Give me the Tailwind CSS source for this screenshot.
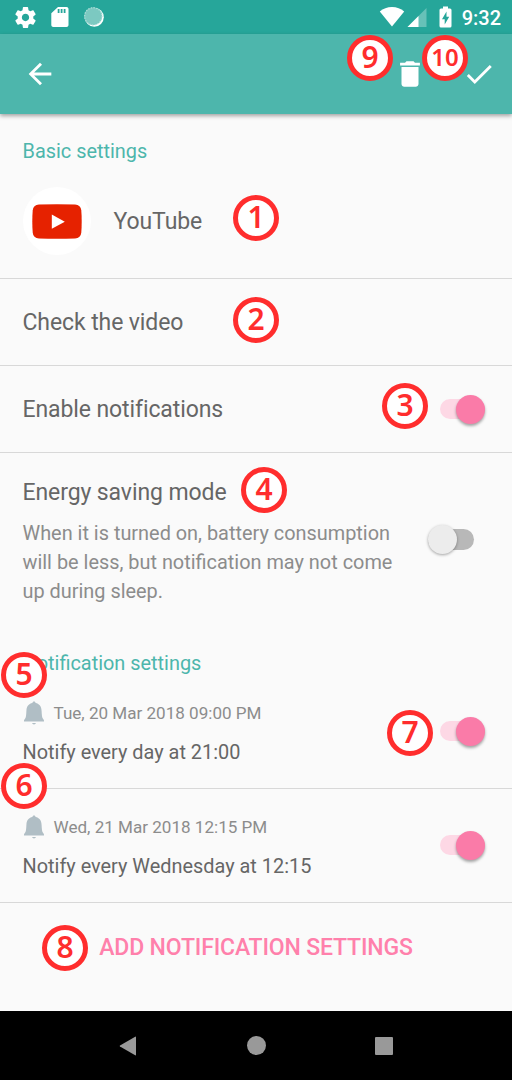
<!DOCTYPE html>
<html lang="en">
<head>
<meta charset="utf-8">
<meta name="viewport" content="width=device-width">
<title>Notification settings</title>
<script src="https://cdn.jsdelivr.net/npm/@tailwindcss/browser@4"></script>
</head>
<body class="bg-[#fafafa]">
<svg class="hidden">
  <symbol id="bell" viewBox="0 0 24 24"><path d="M10.300 20.600h3.400q-.4 1.200-1.700 1.200t-1.700-1.200zM12 2.200c.8 0 1.300.5 1.400 1.300 3.300.6 4.900 3 5.100 6.500.2 4 .3 6 1.500 7.300.6.500.6.900.6 1.900H3.400c0-1 0-1.400.6-1.900C5.200 16 5.300 14 5.500 10c.2-3.500 1.800-5.900 5.100-6.500.1-.8.600-1.300 1.400-1.300z"/></symbol>
</svg>
<div class="relative flex h-[1080px] w-[512px] flex-col overflow-hidden bg-[#fafafa] font-['Roboto',sans-serif] text-[23px] tracking-[-0.1px] text-[#666]">

  <!-- status bar -->
  <div class="flex h-[34px] shrink-0 items-center justify-between bg-[#26a69a] pr-[11px] pl-[13px] text-white">
    <div class="flex items-center gap-[10px]">
      <svg class="size-[25px]" viewBox="0 0 24 24" fill="currentColor"><path d="M19.43 12.98c.04-.32.07-.64.07-.98s-.03-.66-.07-.98l2.11-1.65c.19-.15.24-.42.12-.64l-2-3.46c-.12-.22-.39-.3-.61-.22l-2.49 1c-.52-.4-1.08-.73-1.69-.98l-.38-2.65A.49.49 0 0 0 14 2h-4c-.25 0-.46.18-.49.42l-.38 2.65c-.61.25-1.17.59-1.69.98l-2.49-1c-.23-.09-.49 0-.61.22l-2 3.46c-.13.22-.07.49.12.64l2.11 1.65c-.04.32-.07.65-.07.98s.03.66.07.98l-2.11 1.65c-.19.15-.24.42-.12.64l2 3.46c.12.22.39.3.61.22l2.49-1c.52.4 1.08.73 1.69.98l.38 2.65c.03.24.24.42.49.42h4c.25 0 .46-.18.49-.42l.38-2.65c.61-.25 1.17-.59 1.69-.98l2.49 1c.23.09.49 0 .61-.22l2-3.46c.12-.22.07-.49-.12-.64l-2.11-1.65zM12 15.5c-1.93 0-3.5-1.57-3.5-3.5s1.57-3.5 3.5-3.5 3.5 1.57 3.5 3.5-1.570 3.500-3.500 3.500z"/></svg>
      <svg class="size-6" viewBox="0 0 24 24" fill="currentColor"><path d="M18.500 2H10L3.300 8.300V20c0 1.100.9 2 2 2h13.200c1.100 0 2-.9 2-2V4c0-1.100-.9-2-2-2zM11.500 8H9.700V4h1.800v4zm3 0h-1.800V4h1.800v4zm3 0h-1.800V4h1.800v4z"/></svg>
      <svg class="size-6" viewBox="0 0 24 24"><circle cx="12.300" cy="12.300" r="9.500" fill="#fff"/><circle cx="11.200" cy="11.200" r="9" fill="#7cc9c1"/><circle cx="11.300" cy="11.300" r="8.600" fill="none" stroke="#b0dfda" stroke-width="1.200" stroke-dasharray="1.200 1.500"/></svg>
    </div>
    <div class="flex items-center">
      <svg class="h-6 w-[26px]" viewBox="0 0 26 24" fill="currentColor"><path d="M13 21.500 .8 6.400C4.200 3.600 8.200 2 13 2s8.800 1.600 12.200 4.400z"/></svg>
      <svg class="ml-[2px] h-6 w-5" viewBox="0 0 20 24" fill="currentColor"><path d="M19.500 3v19H.5z" opacity=".3"/><path d="M11.500 11v11H.5z"/></svg>
      <svg class="ml-[12px] h-6 w-[13px]" viewBox="0 0 13 24"><path fill="#fff" d="M4 1.500h5v2h2q1.500 0 1.500 1.500v16q0 1.500-1.500 1.500H2Q.5 22.500.5 21V5Q.5 3.500 2 3.500h2z"/><path fill="#26a69a" d="M7.500 6.500 3 14.300h2.700v5.200l4.500-7.800H7.500z"/></svg>
      <span class="ml-[10px] pt-[1px] text-[20px] font-medium leading-none tracking-normal">9:32</span>
    </div>
  </div>

  <!-- app bar -->
  <div class="z-10 flex h-20 shrink-0 items-center bg-[#4db6ac] pr-4 pl-[22.500px] text-white shadow-[0_2px_4px_rgba(0,0,0,0.35)]">
    <svg class="size-[34px]" viewBox="0 0 24 24" fill="currentColor"><path d="M20 11H7.830l5.590-5.590L12 4l-8 8 8 8 1.410-1.410L7.830 13H20v-2z"/></svg>
    <svg class="ml-auto size-[34px]" viewBox="0 0 24 24" fill="currentColor"><path d="M6 19c0 1.100.9 2 2 2h8c1.100 0 2-.9 2-2V7H6v12zM19 4h-3.500l-1-1h-5l-1 1H5v2h14V4z"/></svg>
    <svg class="ml-[35px] size-[34px]" viewBox="0 0 24 24" fill="currentColor"><path d="M9 16.170 4.830 12l-1.420 1.410L9 19 21 7l-1.410-1.410z"/></svg>
  </div>

  <!-- basic settings -->
  <div class="h-[165px] shrink-0 border-b border-[#d8d8d8] px-[22.500px] pt-[23px]">
    <h2 class="text-[19.900px] leading-[30px] tracking-normal text-[#4db6ac]">Basic settings</h2>
    <div class="mt-[20px] flex items-center">
      <div class="flex size-[68px] items-center justify-center rounded-full bg-white">
        <svg class="h-[35px] w-[50px]" viewBox="0 0 50 35"><path fill="#e62200" d="M7 .6Q25-.3 43 .6q5.800.3 6.300 6 .8 10.900 0 21.800-.5 5.700-6.300 6-18 .9-36 0-5.800-.3-6.300-6-.8-10.900 0-21.800Q1.200.9 7 .6z"/><path fill="#fff" d="m19.800 10.500 13 7.200-13 7z"/></svg>
      </div>
      <span class="ml-[23px] pt-[3px]">YouTube</span>
    </div>
  </div>
  <div class="flex h-[87px] shrink-0 items-center border-b border-[#d8d8d8] px-[22.500px] pt-[3px]">Check the video</div>
  <div class="flex h-[87px] shrink-0 items-center justify-between border-b border-[#d8d8d8] pr-[27px] pl-[22.500px]">
    <span class="pt-[3px]">Enable notifications</span>
    <div class="flex h-5 w-[45px] items-center justify-end rounded-full bg-[#fdd8e5]"><div class="size-[29px] shrink-0 rounded-full bg-[#fa7ba8] shadow-[0_2px_3px_rgba(0,0,0,0.35)]"></div></div>
  </div>
  <div class="flex h-[188px] shrink-0 justify-between pr-[38px] pl-[22.500px]">
    <div class="pt-[25px]">
      <div class="leading-[30px]">Energy saving mode</div>
      <p class="mt-[11px] text-[19.900px] leading-[29px] tracking-normal whitespace-nowrap text-[#8c8c8c]">When it is turned on, battery consumption<br>will be less, but notification may not come<br>up during sleep.</p>
    </div>
    <div class="mt-[76px] flex h-[21px] w-[46px] items-center rounded-full bg-[#b8b8b8]"><div class="size-[29px] shrink-0 rounded-full bg-[#ececec] shadow-[0_1px_3px_rgba(0,0,0,0.35)]"></div></div>
  </div>

  <!-- notification settings -->
  <h2 class="h-[38px] shrink-0 px-[22.500px] pt-[8px] text-[19.900px] leading-[30px] tracking-normal text-[#4db6ac]">Notification settings</h2>
  <div class="flex h-[110px] shrink-0 justify-between border-b border-[#d8d8d8] pr-[27px] pl-[22.500px]">
    <div class="pt-[20px] tracking-normal">
      <div class="flex h-[28px] items-center text-[17.070px] text-[#8c8c8c]"><svg class="-ml-[3px] size-[28px] fill-[#b0bec5]"><use href="#bell"/></svg><span class="ml-[6px] pt-[1px]">Tue, 20 Mar 2018 09:00 PM</span></div>
      <div class="mt-[12px] text-[19.900px] leading-[28px]">Notify every day at 21:00</div>
    </div>
    <div class="mt-[42px] flex h-5 w-[45px] items-center justify-end rounded-full bg-[#fdd8e5]"><div class="size-[29px] shrink-0 rounded-full bg-[#fa7ba8] shadow-[0_2px_3px_rgba(0,0,0,0.35)]"></div></div>
  </div>
  <div class="flex h-[114px] shrink-0 justify-between border-b border-[#d8d8d8] pr-[27px] pl-[22.500px]">
    <div class="pt-[24px] tracking-normal">
      <div class="flex h-[28px] items-center text-[17.070px] text-[#8c8c8c]"><svg class="-ml-[3px] size-[28px] fill-[#b0bec5]"><use href="#bell"/></svg><span class="ml-[6px] pt-[1px]">Wed, 21 Mar 2018 12:15 PM</span></div>
      <div class="mt-[12px] text-[19.900px] leading-[28px]">Notify every Wednesday at 12:15</div>
    </div>
    <div class="mt-[46px] flex h-5 w-[45px] items-center justify-end rounded-full bg-[#fdd8e5]"><div class="size-[29px] shrink-0 rounded-full bg-[#fa7ba8] shadow-[0_2px_3px_rgba(0,0,0,0.35)]"></div></div>
  </div>
  <button class="flex h-[108px] shrink-0 justify-center pt-[29px] leading-[32px] font-medium tracking-[-0.150px] text-[#ff80ab]">ADD NOTIFICATION SETTINGS</button>

  <!-- navigation bar -->
  <div class="flex h-[69px] shrink-0 items-center justify-between bg-black pr-[119px] pl-[117.500px] text-[#999]">
    <svg class="size-5" viewBox="0 0 20 20" fill="currentColor"><path d="M17.200.7q.8-.4.800.5v17.600q0 .9-.8.500L2 10.600q-.8-.6 0-1.200z"/></svg>
    <div class="size-[19px] rounded-full bg-[#999]"></div>
    <div class="size-[18px] rounded-[1px] bg-[#999]"></div>
  </div>

  <!-- numbered callouts -->
  <div class="pointer-events-none absolute inset-0 z-20 font-['Noto_Sans',sans-serif] text-[30px] font-semibold tracking-normal text-[#ff2d2d] [&>div]:absolute [&>div]:flex [&>div]:size-[46px] [&>div]:items-center [&>div]:justify-center [&>div]:rounded-full [&>div]:border-[5px] [&>div]:border-[#ff2d2d] [&>div]:bg-white [&>div]:pb-[2px] [&>div]:leading-none">
    <div class="top-[195px] left-[233px]">1</div>
    <div class="top-[297px] left-[233px]">2</div>
    <div class="top-[383px] left-[382px]">3</div>
    <div class="top-[467px] left-[241px]">4</div>
    <div class="top-[652px] left-[1px]">5</div>
    <div class="top-[763px] left-[1px]">6</div>
    <div class="top-[710px] left-[387px]">7</div>
    <div class="top-[925px] left-[42px]">8</div>
    <div class="top-[35px] left-[347px]">9</div>
    <div class="top-[35px] left-[422px] text-[24px]">10</div>
  </div>
</div>
</body>
</html>
